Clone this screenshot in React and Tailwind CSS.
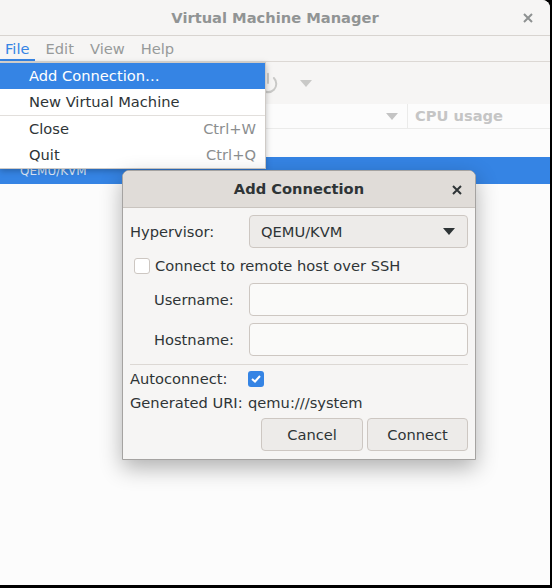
import { Power } from 'lucide-react'

const font = { fontFamily: '"DejaVu Sans", sans-serif' }

// small triangle used by combo / dropdowns
const Caret = ({ className = '' }) => (
  <svg width="12" height="7" viewBox="0 0 12 7" className={className}>
    <path d="M0 0 L12 0 L6 7 Z" fill="currentColor" />
  </svg>
)

const CloseX = ({ className = '' }) => (
  <svg width="10" height="10" viewBox="0 0 10 10" className={className}>
    <path d="M1 1 L9 9 M9 1 L1 9" stroke="currentColor" strokeWidth="2" />
  </svg>
)

const MenuItem = ({ label, accel, active }) => (
  <div
    className={`flex h-[26px] items-center justify-between pl-[29px] pr-[9px] ${
      active ? 'bg-[#3584e4] text-white' : 'text-[#2e3436]'
    }`}
  >
    <span>{label}</span>
    {accel && <span className="text-[#8b8e8f]">{accel}</span>}
  </div>
)

const Entry = () => (
  <div className="h-[33px] w-[219px] rounded-[4px] border border-[#cdc7c2] bg-[#fafaf9]" />
)

export default function App() {
  return (
    <div className="relative h-[588px] w-[552px] overflow-hidden bg-black text-[14.67px] leading-[18px]" style={font}>
      {/* main window */}
      <div className="flex h-[585px] w-[550px] flex-col overflow-hidden rounded-tr-[8px] bg-[#fcfcfc]">
        {/* titlebar */}
        <div className="relative flex h-[36px] shrink-0 items-center justify-center border-b border-[#d8d4d0] bg-[#f6f5f4]">
          <span className="font-bold text-[#919494]">Virtual Machine Manager</span>
          <CloseX className="absolute right-[17px] top-[13px] text-[#8e9191]" />
        </div>
        {/* menubar */}
        <div className="flex h-[26px] shrink-0 items-stretch border-b border-[#dcd8d4] bg-[#f6f5f4] text-[#979a9a]">
          <div className="flex items-center border-b-2 border-[#3584e4] px-[5px] pt-[2px] text-[#3584e4]">File</div>
          <div className="flex items-center pl-[11px]">Edit</div>
          <div className="flex items-center pl-[16px]">View</div>
          <div className="flex items-center pl-[16px]">Help</div>
        </div>
        {/* toolbar */}
        <div className="flex h-[42px] shrink-0 items-center bg-[#f6f5f4] pl-[257px]">
          <Power size={22} strokeWidth={2.2} className="text-[#c9c9c7]" />
          <Caret className="ml-[21px] text-[#c9c9c7]" />
        </div>
        {/* column header */}
        <div className="flex h-[25px] shrink-0 items-center border-b border-[#ebebea] bg-[#fcfcfc]">
          <div className="flex w-[407px] justify-end pr-[9px]">
            <Caret className="text-[#c4c4c4]" />
          </div>
          <div className="flex h-full items-center border-l border-[#ebebea] pl-[7px] font-bold text-[#c5c5c5]">CPU usage</div>
        </div>
        <div className="h-[28px] shrink-0" />
        {/* selected row */}
        <div className="flex h-[27px] shrink-0 items-center bg-[#3584e4] pl-[20px] text-[12px] text-[#dce8f8]">QEMU/KVM</div>
        <div className="flex-1" />
      </div>

      {/* File menu dropdown */}
      <div className="absolute left-0 top-[62px] w-[266px] border border-l-0 border-[#cfcbc7] bg-white shadow-[0_2px_6px_rgba(0,0,0,0.25)]">
        <MenuItem label="Add Connection…" active />
        <MenuItem label="New Virtual Machine" />
        <div className="h-px bg-[#e2dfdc]" />
        <MenuItem label="Close" accel="Ctrl+W" />
        <MenuItem label="Quit" accel="Ctrl+Q" />
      </div>

      {/* Add Connection dialog */}
      <div className="absolute left-[122px] top-[170px] w-[354px] overflow-hidden rounded-t-[7px] border border-[#a5a3a1] bg-[#f6f5f4] text-[#2e3436] shadow-[0_8px_22px_rgba(0,0,0,0.3)]">
        <div className="relative flex h-[37px] items-center justify-center border-b border-[#c9c4bf] bg-[#e0dcd8]">
          <span className="font-bold">Add Connection</span>
          <CloseX className="absolute right-[13px] top-[14px] text-[#2e3436]" />
        </div>
        <div className="px-[7px] pb-[8px] pt-[7px]">
          <div className="flex items-center justify-between">
            <span>Hypervisor:</span>
            <div className="flex h-[33px] w-[219px] items-center justify-between rounded-[4px] border border-[#cdc7c2] bg-[#edebe9] pl-[11px] pr-[12px]">
              <span>QEMU/KVM</span>
              <Caret className="text-[#2e3436]" />
            </div>
          </div>
          <div className="flex h-[35px] items-center pl-[4px]">
            <div className="h-[16px] w-[16px] rounded-[3px] border border-[#cdc7c2] bg-white" />
            <span className="ml-[5px]">Connect to remote host over SSH</span>
          </div>
          <div className="flex items-center justify-between">
            <span className="pl-[24px]">Username:</span>
            <Entry />
          </div>
          <div className="mt-[7px] flex items-center justify-between">
            <span className="pl-[24px]">Hostname:</span>
            <Entry />
          </div>
          <div className="mt-[8px] h-px bg-[#dcd8d4]" />
          <div className="flex h-[28px] items-center">
            <span className="w-[118px]">Autoconnect:</span>
            <div className="flex h-[16px] w-[16px] items-center justify-center rounded-[3px] bg-[#3584e4]">
              <svg width="10" height="8" viewBox="0 0 10 8">
                <path d="M1 4 L4 6.5 L9 1" stroke="white" strokeWidth="2" fill="none" />
              </svg>
            </div>
          </div>
          <div className="flex h-[20px] items-center">
            <span className="w-[118px]">Generated URI:</span>
            <span>qemu:///system</span>
          </div>
          <div className="mt-[5px] flex justify-end gap-[4px]">
            <button className="h-[33px] w-[102px] rounded-[4px] border border-[#cdc7c2] bg-[#edebe9]">Cancel</button>
            <button className="h-[33px] w-[101px] rounded-[4px] border border-[#cdc7c2] bg-[#edebe9]">Connect</button>
          </div>
        </div>
      </div>
    </div>
  )
}
